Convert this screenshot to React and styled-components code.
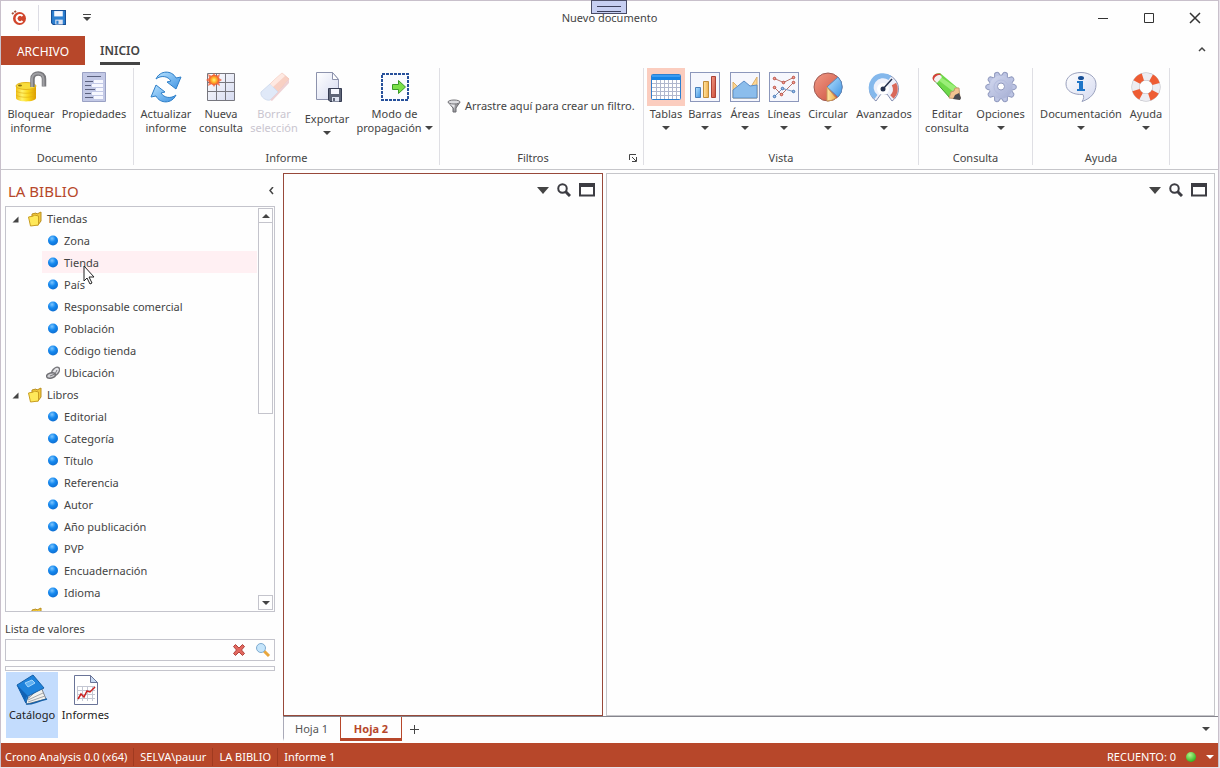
import React from 'react';
import styled, { createGlobalStyle } from 'styled-components';

const GlobalStyle = createGlobalStyle`
    * { box-sizing: border-box; }
    body {
        margin: 0;
        background: #e9e2ea;
        color: #444;
        font-family: "Noto Sans", "Open Sans", sans-serif;
        font-size: 11px;
        line-height: 14px;
    }
    button, input { font: inherit; color: inherit; }
    button { margin: 0; padding: 0; border: 0; background: none; cursor: default; white-space: nowrap; }
    svg { display: block; flex: none; }
    ul { margin: 0; padding: 0; list-style: none; }
`;

const RED = '#b7472a';

/* ---------- window ---------- */

const Page = styled.div`
    display: flex;
    height: 100vh;
    padding: 0 1px 1px 0;
`;

const Window = styled.div`
    position: relative;
    flex: 1;
    min-width: 0;
    display: flex;
    flex-direction: column;
    background: #fefefe;
    border: 1px solid #c8c0cb;
    border-bottom: 0;
`;

const TitleBar = styled.header`
    display: grid;
    grid-template-columns: 1fr auto 1fr;
    align-items: center;
    height: 35px;
    padding-bottom: 2px;
`;

const QuickAccess = styled.div`
    display: flex;
    align-items: center;
    gap: 12px;
    padding-left: 8px;
`;

const QuickSeparator = styled.span`
    width: 1px;
    height: 26px;
    margin-left: -1px;
    background: #dcdce4;
`;

const Title = styled.h1`
    margin: 0;
    font-size: 11px;
    font-weight: 400;
    line-height: 14px;
`;

const WindowButtons = styled.div`
    display: flex;
    justify-content: flex-end;
    button {
        display: flex;
        align-items: center;
        justify-content: center;
        width: 46px;
        height: 32px;
    }
`;

/* the small handle lies over the top edge of the window */
const PullHandle = styled.div`
    position: absolute;
    top: -1px;
    left: 50%;
    width: 36px;
    height: 14px;
    margin-left: -19px;
    padding: 5px 5px;
    border: 1px solid #4a4c66;
    background: #c7cff2;
    &::before {
        content: '';
        display: block;
        height: 4px;
        border: solid #3c3f5c;
        border-width: 1px 0;
    }
`;

/* ---------- ribbon ---------- */

const RibbonTabs = styled.nav`
    display: flex;
    align-items: stretch;
    height: 29px;
    font-size: 12px;
`;

const FileTab = styled.button`
    width: 84px;
    padding-top: 2px;
    background: ${RED};
    color: #fff;
`;

const RibbonTab = styled.button`
    margin-left: 15px;
    padding-top: 3px;
    border-bottom: 3px solid #444;
    font-weight: 600;
`;

const CollapseButton = styled.button`
    margin-left: auto;
    padding: 0 11px 4px;
`;

const RibbonBar = styled.div`
    display: flex;
    height: 105px;
    padding: 3px 0 4px;
    border-bottom: 1px solid #c6c6ca;
`;

const Group = styled.section`
    display: flex;
    flex-direction: column;
    justify-content: space-between;
    padding: 0 3px;
    border-right: 1px solid #dfdfe4;
`;

const GroupItems = styled.div`
    display: flex;
    align-items: flex-start;
`;

const GroupFooter = styled.div`
    display: flex;
    align-items: center;
    height: 14px;
    span { flex: 1; text-align: center; }
    button { width: 17px; padding-left: 6px; }
`;

const ToolButton = styled.button`
    display: flex;
    flex-direction: column;
    align-items: center;
    width: ${(props) => props.$width}px;
    color: ${(props) => (props.disabled ? '#c9c5cf' : '#444')};
`;

const ToolIcon = styled.span`
    display: flex;
    padding: 3px;
    margin-bottom: ${(props) => (props.$spaced ? 6 : 1)}px;
    background: ${(props) => (props.$active ? '#fbcdbf' : 'transparent')};
    opacity: ${(props) => (props.$faded ? 0.5 : 1)};
`;

const Line = styled.span`
    display: flex;
    align-items: center;
    justify-content: center;
    gap: 3px;
    height: 14px;
`;

const FilterDrop = styled.div`
    display: flex;
    align-items: center;
    gap: 4px;
    width: 197px;
    height: 76px;
    padding-left: 4px;
    white-space: nowrap;
`;

/* ---------- body ---------- */

const Body = styled.main`
    flex: 1;
    min-height: 0;
    display: flex;
    gap: 8px;
    padding-top: 3px;
`;

const Sidebar = styled.aside`
    display: flex;
    flex-direction: column;
    flex: none;
    width: 274px;
    padding: 0 0 5px 4px;
`;

const SidebarHead = styled.div`
    display: flex;
    align-items: center;
    justify-content: space-between;
    height: 33px;
    padding-left: 3px;
    padding-top: 2px;
    h2 {
        margin: 0;
        font-size: 15px;
        font-weight: 400;
        line-height: 20px;
        color: ${RED};
    }
`;

const TreeBox = styled.div`
    flex: 1;
    min-height: 0;
    display: flex;
    border: 1px solid #c4c4cc;
`;

const Tree = styled.ul`
    flex: 1;
    overflow: hidden;
`;

const Row = styled.li`
    display: flex;
    align-items: center;
    gap: 4px;
    height: 22px;
    margin-left: ${(props) => (props.$level ? 36 : 6)}px;
    padding: 2px 0 0 ${(props) => (props.$level ? 4 : 0)}px;
    background: ${(props) => (props.$hover ? '#fff0f3' : 'transparent')};
`;

const Expander = styled.button`
    width: 11px;
`;

const ScrollBar = styled.div`
    display: flex;
    flex-direction: column;
    width: 15px;
    margin: 1px;
    button {
        display: flex;
        align-items: center;
        justify-content: center;
        height: 15px;
        border: 1px solid #c4c4cc;
    }
`;

const ScrollTrack = styled.div`
    flex: 1;
    &::before {
        content: '';
        display: block;
        height: 51%;
        border: 1px solid #c4c4cc;
        border-top: 0;
    }
`;

const ValuesLabel = styled.label`
    padding: 10px 0 3px;
`;

const SearchBox = styled.div`
    display: flex;
    align-items: center;
    gap: 9px;
    height: 22px;
    padding-right: 3px;
    border: 1px solid #c4c4cc;
    input {
        flex: 1;
        min-width: 0;
        border: 0;
        outline: 0;
        background: none;
    }
`;

const Splitter = styled.div`
    height: 5px;
    margin: 5px 0 1px;
    border: 1px solid #c4c4cc;
`;

const Views = styled.div`
    display: flex;
    height: 66px;
    padding-left: 1px;
`;

const ViewButton = styled.button`
    display: flex;
    flex-direction: column;
    align-items: center;
    width: ${(props) => (props.$active ? 52 : 55)}px;
    padding-top: 2px;
    gap: 2px;
    color: #222;
    background: ${(props) => (props.$active ? '#c3dcfd' : 'transparent')};
`;

const Workspace = styled.section`
    flex: 1;
    min-width: 0;
    display: flex;
    flex-direction: column;
`;

const Panels = styled.div`
    flex: 1;
    display: grid;
    grid-template-columns: 320fr 609fr;
    gap: 3px;
    padding-right: 3px;
`;

const Panel = styled.article`
    border: 1px solid ${(props) => (props.$active ? '#98493a' : '#c6c6ca')};
`;

const PanelTools = styled.div`
    display: flex;
    align-items: center;
    justify-content: flex-end;
    gap: 8px;
    padding: 8px 7px 0 0;
`;

const SheetBar = styled.div`
    display: flex;
    height: 27px;
    padding-bottom: 2px;
    border-top: 1px solid #85858d;
`;

const SheetTab = styled.button`
    width: ${(props) => (props.$active ? 62 : 57)}px;
    padding-top: 2px;
    border: solid ${(props) => (props.$active ? RED : 'transparent')};
    border-width: 0 1px 3px;
    border-left-color: ${(props) => (props.$active ? RED : '#aaaab8')};
    font-weight: ${(props) => (props.$active ? 700 : 400)};
    color: ${(props) => (props.$active ? RED : '#555')};
`;

const AddSheet = styled.button`
    width: 24px;
    padding-left: 7px;
`;

const SheetMenu = styled.button`
    margin-left: auto;
    padding-right: 8px;
`;

const StatusBar = styled.footer`
    display: flex;
    align-items: center;
    height: 24px;
    padding-top: 3px;
    background: ${RED};
    color: #fff;
`;

const StatusItem = styled.span`
    padding: 2px 6px 2px 4px;
    border-right: ${(props) => (props.$last ? '0' : '1px solid #a03a20')};
    & + & { padding-left: 6px; }
`;

const StatusRight = styled.div`
    display: flex;
    align-items: center;
    gap: 10px;
    margin-left: auto;
    padding-right: 4px;
`;

/* the pointer floats over the tree */
const Pointer = styled.svg`
    position: absolute;
    left: 82px;
    top: 264px;
`;

/* ---------- icons ---------- */

const HiddenSvg = styled.svg`
    position: absolute;
    width: 0;
    height: 0;
`;

const Defs = () => (
    <HiddenSvg aria-hidden="true">
        <defs>
            <linearGradient id="gold" x1="0" x2="1"><stop offset="0" stopColor="#f0bd14" /><stop offset=".3" stopColor="#fff36a" /><stop offset=".6" stopColor="#fbd81c" /><stop offset="1" stopColor="#dc9c00" /></linearGradient>
            <linearGradient id="paper" x1="0" y1="0" x2="1" y2="1"><stop offset="0" stopColor="#fff" /><stop offset="1" stopColor="#d5daf0" /></linearGradient>
            <linearGradient id="gear" x1="0" y1="0" x2="1" y2="1"><stop offset="0" stopColor="#d3d9f0" /><stop offset="1" stopColor="#a4add2" /></linearGradient>
            <linearGradient id="blue" x1="0" y1="0" x2="1" y2="1"><stop offset="0" stopColor="#b7e2ff" /><stop offset="1" stopColor="#3f93e2" /></linearGradient>
            <linearGradient id="orange" x1="0" y1="0" x2="1" y2="0"><stop offset="0" stopColor="#ffe6a6" /><stop offset="1" stopColor="#f2b04c" /></linearGradient>
            <linearGradient id="red" x1="0" y1="0" x2="1" y2="1"><stop offset="0" stopColor="#f19a86" /><stop offset="1" stopColor="#cb4c3a" /></linearGradient>
            <radialGradient id="ball" cx=".4" cy=".3" r=".7"><stop offset="0" stopColor="#7cc6ff" /><stop offset=".5" stopColor="#1488ef" /><stop offset="1" stopColor="#0f6fd2" /></radialGradient>
            <radialGradient id="green" cx=".4" cy=".3" r=".7"><stop offset="0" stopColor="#b5f58c" /><stop offset="1" stopColor="#2db51f" /></radialGradient>
            <radialGradient id="sun"><stop offset="0" stopColor="#fff77a" /><stop offset=".5" stopColor="#ffb429" /><stop offset="1" stopColor="#f0552c" /></radialGradient>
        </defs>
    </HiddenSvg>
);

const Svg = ({ size = 32, children }) => (
    <svg width={size} height={size} viewBox={`0 0 ${size} ${size}`} aria-hidden="true">{children}</svg>
);

const Caret = ({ wide, up, color = '#444' }) => (
    <svg width={wide ? 12 : 8} height={wide ? 7 : 4} viewBox="0 0 8 4" preserveAspectRatio="none" aria-hidden="true">
        <path d={up ? 'M0 4h8L4 0z' : 'M0 0h8L4 4z'} fill={color} />
    </svg>
);

const LockIcon = () => (
    <Svg>
        <path d="M1 15v12c0 4.500 20 4.500 20 0V15z" fill="url(#gold)" />
        <path d="M1 20c4 3 16 3 20 0M1 24c4 3 16 3 20 0" fill="none" stroke="#e0ae10" opacity=".6" />
        <ellipse cx="11" cy="15" rx="10" ry="3.500" fill="#f8dc3c" stroke="#e3b41c" />
        <ellipse cx="5" cy="14.500" rx="2" ry="1" fill="#8b7010" />
        <path d="M17.500 16V8c0-7.500 11.500-7.500 11.500 0v7.500" fill="none" stroke="#77777b" strokeWidth="4.500" />
        <path d="M17 16V8c0-7.500 11.500-7.500 11.500 0v7" fill="none" stroke="#a0a0a4" strokeWidth="2" />
    </Svg>
);

const PropertiesIcon = () => (
    <Svg>
        <path d="M4.500 1.500h23v29h-23z" fill="#c3c9e6" stroke="#9aa1c4" />
        <path d="M9 5.500h14" stroke="#5b617e" />
        <path d="M16 9h9v3h-9zM14 13h11v3H14zM18 17h7v3h-7zM14 21h11v3H14zM16 25h9v3h-9z" fill="#f7f8ff" />
        <path d="M7 10.500h8M7 14.500h6M7 18.500h10M7 22.500h6M7 26.500h8" stroke="#5b617e" />
    </Svg>
);

const RefreshIcon = () => (
    <Svg>
        <path d="M6 8C10-1 22-1 26 7l5-1-5 12-9-7 4-1C18 5 11 4 6 8z" fill="url(#blue)" stroke="#2f7fc8" />
        <path d="M26 24C22 33 10 33 6 25l-5 1 5-12 9 7-4 1c3 5 10 6 15 2z" fill="url(#blue)" stroke="#2f7fc8" />
    </Svg>
);

const NewQueryIcon = () => (
    <Svg>
        <path d="M2.500 2.500h27v27h-27z" fill="url(#paper)" stroke="#77777f" />
        <path d="M11.500 3v27M20.500 3v27M3 11.500h27M3 20.500h27" stroke="#77777f" />
        <path d="M9 2l2 3 4-2-1 4 3 2-3 2 1 4-4-2-2 3-2-3-4 2 1-4-3-2 3-2-1-4 4 2z" fill="#f2603a" opacity=".8" />
        <circle cx="9" cy="9" r="5" fill="url(#sun)" />
    </Svg>
);

const EraserIcon = () => (
    <Svg>
        <path d="M12 13L24 2l7 6-12 14z" fill="#f3a38a" stroke="#e8927a" />
        <path d="M3 21l9-8 8 8-8 8c-4 1-10-3-9-8z" fill="#c3d6f3" stroke="#a5bce0" />
        <path d="M12 13L24 2l3 3-12 11z" fill="#ffd6c7" />
        <path d="M12 29l8-8 11-13v4L14 30z" fill="#e0a6ac" />
    </Svg>
);

const Floppy = ({ x = 0, y = 0, scale = 1, color = '#4b536b', edge = '#363c52' }) => (
    <g transform={`translate(${x} ${y}) scale(${scale})`}>
        <path d="M.5.5h13v13H2L.5 12z" fill={color} stroke={edge} />
        <path d="M3 1h8v5H3z" fill="#f6f8ff" />
        <path d="M4 9h7v4.500H4z" fill="#dfe4f2" />
        <path d="M5 10h2v3H5z" fill={color} />
    </g>
);

const ExportIcon = () => (
    <Svg>
        <path d="M5.500 1.500h16l6 7v20h-22z" fill="url(#paper)" stroke="#8d93ad" />
        <path d="M21.500 1.500v7h6z" fill="#fff" stroke="#8d93ad" />
        <Floppy x={17} y={17} color="#5f6678" />
    </Svg>
);

const PropagationIcon = () => (
    <Svg>
        <rect x="3" y="3" width="26" height="26" fill="#fbfcff" stroke="#27509b" strokeWidth="2" strokeDasharray="3 1" />
        <path d="M13.500 13.500h6v-4l7 6.500-7 6.500v-4h-6z" fill="#7be04a" stroke="#3a9a28" />
    </Svg>
);

const FunnelIcon = () => (
    <Svg size={14}>
        <path d="M1 3l5 6v4h3V9l4-6z" fill="#98989c" stroke="#6b6b70" />
        <path d="M2 4l5 5v3l1-8z" fill="#e8e8ec" />
        <ellipse cx="7" cy="3" rx="6" ry="2" fill="#dcdce0" stroke="#747478" />
    </Svg>
);

const TableIcon = () => (
    <Svg>
        <rect x="1.500" y="3.500" width="29" height="25" rx="1" fill="#fff" stroke="#2c7fd0" />
        <path d="M2 4h28v5H2z" fill="#1683e4" />
        <path d="M2 5h28" stroke="#5fb4ff" />
        <path d="M6.500 9v19M10.500 9v19M14.500 9v19M18.500 9v19M22.500 9v19M26.500 9v19M2 12.500h28M2 16.500h28M2 20.500h28M2 24.500h28" stroke="#b0b7cd" />
    </Svg>
);

const ChartFrame = () => <rect x="1.500" y="1.500" width="29" height="29" fill="#f6f7fd" stroke="#8c97bb" />;

const BarsIcon = () => (
    <Svg>
        <ChartFrame />
        <path d="M6.500 16.500h5v10h-5z" fill="url(#blue)" stroke="#4a80bb" />
        <path d="M14.500 10.500h5v16h-5z" fill="url(#orange)" stroke="#c08c3a" />
        <path d="M22.500 5.500h4v21h-4z" fill="url(#red)" stroke="#ab4236" />
    </Svg>
);

const AreasIcon = () => (
    <Svg>
        <ChartFrame />
        <path d="M4 11l6 6 10 2 8-13v21H4z" fill="#ffd793" stroke="#dcae66" />
        <path d="M4 19l11-9 6 5 7-1v13H4z" fill="#8bbdec" stroke="#5a8cc6" />
    </Svg>
);

const LinesIcon = () => (
    <Svg>
        <ChartFrame />
        <path d="M6.500 7.500l9 4 10-5M6.500 16.500l7 7 12-12" fill="none" stroke="#b8736b" />
        <path d="M6.500 25.500l8-8 11 3" fill="none" stroke="#7392bd" />
        <g fill="#f5a397" stroke="#b8483c">
            <circle cx="6.500" cy="7.500" r="1.250" /><circle cx="15.500" cy="11.500" r="1.250" /><circle cx="25.500" cy="6.500" r="1.250" />
            <circle cx="6.500" cy="16.500" r="1.250" /><circle cx="13.500" cy="23.500" r="1.250" /><circle cx="25.500" cy="11.500" r="1.250" />
        </g>
        <g fill="#9cc3ef" stroke="#3f70b0">
            <circle cx="6.500" cy="25.500" r="1.250" /><circle cx="14.500" cy="17.500" r="1.250" /><circle cx="25.500" cy="20.500" r="1.250" />
        </g>
    </Svg>
);

const PieIcon = () => (
    <Svg>
        <circle cx="16" cy="16" r="14" fill="url(#red)" stroke="#9e5a54" />
        <path d="M15 16L26 6a14 14 0 010 20z" fill="url(#blue)" stroke="#5a86ba" />
        <path d="M15 16l9 11a14 14 0 01-9 3z" fill="url(#orange)" stroke="#c99855" />
    </Svg>
);

const GaugeIcon = () => (
    <Svg>
        <path d="M8 30A14.500 14.500 0 1124 30l-5-7h-6z" fill="#eef1fb" stroke="#8690b2" />
        <path d="M8 26A11 11 0 0122 7" fill="none" stroke="#84b8ec" strokeWidth="5" />
        <path d="M26 13a11 11 0 01-2 13" fill="none" stroke="#d9695a" strokeWidth="5" />
        <circle cx="15" cy="18" r="6" fill="#fff" />
        <path d="M15 18l9-10" stroke="#25324f" strokeWidth="1.500" />
        <circle cx="15" cy="18" r="2.500" fill="#25324f" />
    </Svg>
);

const PencilIcon = () => (
    <Svg>
        <path d="M2 8C1 5 4 2 9 2l19 16-9 9z" fill="#6fd94a" />
        <path d="M8 5l20 13-4 4L6 8z" fill="#9bee78" />
        <path d="M2.500 8.500L19 27" stroke="#3f9c2b" />
        <path d="M2 9C0 5 5 1 10 3L4 11z" fill="#d5403a" />
        <path d="M3 9c0-3 3-5 6-5l2 2-5 6z" fill="#f4f1f1" />
        <path d="M18 27l2-6 3-1 1-3 4 0 1 11z" fill="#f3c391" stroke="#c49a70" />
        <path d="M22 28l2-4 4-2 2 5-1 2z" fill="#4a4a50" />
    </Svg>
);

const GearIcon = () => (
    <Svg>
        {[0, 36, 72, 108, 144, 180, 216, 252, 288, 324].map((a) => (
            <path key={a} d="M12.500 6l1.500-4.500c1-1 3-1 4 0L19.500 6z" fill="#bcc4e3" stroke="#8f98bd" transform={`rotate(${a + 18} 16 16)`} />
        ))}
        <circle cx="16" cy="16" r="11.500" fill="url(#gear)" />
        <circle cx="16" cy="16" r="7" fill="none" stroke="#b4bcde" />
        <circle cx="16" cy="15.500" r="3.500" fill="#fff" stroke="#8f98bd" />
    </Svg>
);

const InfoIcon = () => (
    <Svg>
        <path d="M16 1.500c9 0 15 5 15 12 0 8-5 14-14 17 2-3 2-5 1-7C8 24 1 20 1 13S7 1.500 16 1.500z" fill="url(#paper)" stroke="#9aa1bd" />
        <ellipse cx="16" cy="7" rx="3" ry="2" fill="#174f96" />
        <path d="M12 10h6v8h2v2h-8v-2h2v-6h-2z" fill="#1f76c8" />
    </Svg>
);

const RingIcon = () => (
    <Svg>
        <circle cx="16" cy="16" r="10.500" fill="none" stroke="#b4b4bc" strokeWidth="8" />
        <circle cx="16" cy="16" r="10.500" fill="none" stroke="#ededf2" strokeWidth="7" />
        <circle cx="16" cy="16" r="10.500" fill="none" stroke="#ee5c33" strokeWidth="7.500" strokeDasharray="8 8.493" strokeDashoffset="-5" />
    </Svg>
);

const FolderIcon = () => (
    <Svg size={16}>
        <path d="M5 3l4-1 1 1 4-2v9l-3 4-6-1z" fill="#f3c93a" stroke="#b98e20" />
        <path d="M1.500 6l5-1 1-1 4 1v9l-8 1z" fill="#ffe95a" stroke="#c99e20" />
    </Svg>
);

const Ball = () => (
    <Svg size={14}><circle cx="7" cy="6.500" r="5" fill="url(#ball)" /></Svg>
);

const ChainIcon = () => (
    <Svg size={14}>
        <ellipse cx="9.500" cy="5.500" rx="5" ry="3" transform="rotate(-50 9.500 5.500)" fill="#e4e4e8" stroke="#77777b" strokeWidth="1.500" />
        <ellipse cx="5" cy="9.500" rx="4.500" ry="2.500" transform="rotate(-15 5 9.500)" fill="#d0d0d4" stroke="#707074" strokeWidth="1.500" />
        <path d="M4 10l5-2 2-4" fill="none" stroke="#77777b" />
    </Svg>
);

const ExpanderMark = () => (
    <Svg size={7}><path d="M6.500.5v6h-6z" fill="#444" /></Svg>
);

const ClearIcon = () => (
    <Svg size={14}>
        <path d="M1.500 3.500l2-2L7 5l3.500-3.500 2 2L9.500 7l3 3.500-2 2L7 9l-3.500 3.500-2-2L4.500 7z" fill="#e2675e" stroke="#b0433d" />
    </Svg>
);

const FindIcon = () => (
    <Svg size={16}>
        <path d="M9 9l5 5" stroke="#e8a63c" strokeWidth="3" />
        <circle cx="6" cy="6" r="4.500" fill="#c5e5fb" stroke="#7fabd0" />
    </Svg>
);

const ZoomIcon = () => (
    <Svg size={14}>
        <circle cx="5.500" cy="5.500" r="4.250" fill="none" stroke="#3c3c42" strokeWidth="2" />
        <path d="M8.500 8.500l4.500 4.500" stroke="#3c3c42" strokeWidth="3" />
    </Svg>
);

const MaximizeIcon = () => (
    <Svg size={16}>
        <path d="M1 2.500h14v11H1z" fill="none" stroke="#3c3c42" strokeWidth="2" />
        <path d="M0 1h16v4H0z" fill="#3c3c42" />
    </Svg>
);

const BookIcon = () => (
    <Svg>
        <path d="M9 27l16-14 5 12-19 5z" fill="#f2f2ee" stroke="#7c8087" />
        <path d="M12 26l15-7M12 28l17-6" stroke="#a4a7ac" />
        <path d="M1 11L17 1l11 13-16 8-2 7z" fill="#1f83dc" stroke="#1560a8" />
        <path d="M1 11l9 19c-1-5 0-7 2-8z" fill="#1262b4" />
        <path d="M9 9l7-3 3 3-7 4z" fill="#5fb0f2" stroke="#a5d6fb" />
        <path d="M10 30c5 1 9-2 21-5" fill="none" stroke="#1560a8" strokeWidth="1.500" />
    </Svg>
);

const ReportIcon = () => (
    <Svg>
        <path d="M4.500 1.500h16l7 7v22h-23z" fill="#fff" stroke="#6a7498" />
        <path d="M20.500 1.500v7h7z" fill="#c7daf2" stroke="#6a7498" />
        <path d="M7 12.500h18M7 16.500h18M7 20.500h18M7 24.500h18M7.500 12v15M12.500 12v15M17.500 12v15M22.500 12v15" stroke="#c4c7d3" />
        <path d="M8 25l3-5 3 3 3-6 3 1 5-5" fill="none" stroke="#c92020" strokeWidth="1.500" />
    </Svg>
);

const LogoIcon = () => (
    <Svg size={18}>
        <circle cx="10.500" cy="9.500" r="6.500" fill="#d1452c" />
        <path d="M13.500 7a3.500 3.500 0 100 5" fill="none" stroke="#fff" strokeWidth="2" />
        <path d="M3 5l4-3" stroke="#a4523e" strokeWidth="2" strokeDasharray="2 1" />
    </Svg>
);

/* ---------- data ---------- */

const groups = [
    {
        name: 'Documento',
        items: [
            { width: 54, lines: ['Bloquear', 'informe'], icon: LockIcon },
            { width: 72, lines: ['Propiedades'], icon: PropertiesIcon },
        ],
    },
    {
        name: 'Informe',
        items: [
            { width: 58, lines: ['Actualizar', 'informe'], icon: RefreshIcon },
            { width: 52, lines: ['Nueva', 'consulta'], icon: NewQueryIcon },
            { width: 54, lines: ['Borrar', 'selección'], icon: EraserIcon, disabled: true },
            { width: 52, lines: ['Exportar'], icon: ExportIcon, menu: true, spaced: true },
            { width: 83, lines: ['Modo de', 'propagación'], icon: PropagationIcon, inlineMenu: true },
        ],
    },
    { name: 'Filtros', filter: true },
    {
        name: 'Vista',
        items: [
            { width: 38, lines: ['Tablas'], icon: TableIcon, menu: true, active: true },
            { width: 40, lines: ['Barras'], icon: BarsIcon, menu: true },
            { width: 40, lines: ['Áreas'], icon: AreasIcon, menu: true },
            { width: 38, lines: ['Líneas'], icon: LinesIcon, menu: true },
            { width: 50, lines: ['Circular'], icon: PieIcon, menu: true },
            { width: 62, lines: ['Avanzados'], icon: GaugeIcon, menu: true },
        ],
    },
    {
        name: 'Consulta',
        items: [
            { width: 50, lines: ['Editar', 'consulta'], icon: PencilIcon },
            { width: 57, lines: ['Opciones'], icon: GearIcon, menu: true },
        ],
    },
    {
        name: 'Ayuda',
        items: [
            { width: 90, lines: ['Documentación'], icon: InfoIcon, menu: true },
            { width: 40, lines: ['Ayuda'], icon: RingIcon, menu: true },
        ],
    },
];

const tree = [
    { name: 'Tiendas', items: ['Zona', 'Tienda', 'País', 'Responsable comercial', 'Población', 'Código tienda', 'Ubicación'] },
    { name: 'Libros', items: ['Editorial', 'Categoría', 'Título', 'Referencia', 'Autor', 'Año publicación', 'PVP', 'Encuadernación', 'Idioma'] },
    { name: 'Tiempo', items: [] },
];

/* ---------- components ---------- */

const Tool = ({ item }) => {
    const Icon = item.icon;
    return (
        <ToolButton $width={item.width} disabled={item.disabled}>
            <ToolIcon $active={item.active} $spaced={item.spaced} $faded={item.disabled}><Icon /></ToolIcon>
            {item.lines.map((line, i) => (
                <Line key={line}>
                    {line}
                    {item.inlineMenu && i === 1 && <Caret />}
                </Line>
            ))}
            {item.menu && <Line><Caret /></Line>}
        </ToolButton>
    );
};

const RibbonGroup = ({ group }) => (
    <Group>
        <GroupItems>
            {group.filter
                ? <FilterDrop><FunnelIcon />Arrastre aquí para crear un filtro.</FilterDrop>
                : group.items.map((item) => <Tool item={item} key={item.lines[0]} />)}
        </GroupItems>
        <GroupFooter>
            <span>{group.name}</span>
            {group.filter && (
                <button aria-label="Opciones de filtros">
                    <Svg size={8}><path d="M.5 6V.5H7M3 3l4 4M7.500 3v4.500H3" fill="none" stroke="#444" /></Svg>
                </button>
            )}
        </GroupFooter>
    </Group>
);

const FieldTree = () => (
    <Tree>
        {tree.map((folder) => (
            <React.Fragment key={folder.name}>
                <Row>
                    <Expander aria-label={folder.name}><ExpanderMark /></Expander>
                    <FolderIcon />
                    <span>{folder.name}</span>
                </Row>
                {folder.items.map((name) => (
                    <Row key={name} $level={1} $hover={name === 'Tienda'}>
                        {name === 'Ubicación' ? <ChainIcon /> : <Ball />}
                        <span>{name}</span>
                    </Row>
                ))}
            </React.Fragment>
        ))}
    </Tree>
);

const SheetPanel = ({ active }) => (
    <Panel $active={active}>
        <PanelTools>
            <button aria-label="Menú"><Caret wide /></button>
            <button aria-label="Zoom"><ZoomIcon /></button>
            <button aria-label="Maximizar panel"><MaximizeIcon /></button>
        </PanelTools>
    </Panel>
);

export default class App extends React.Component {
    state = { search: '' };

    onSearch = (e) => {
        this.setState({ search: e.target.value });
    }

    render() {
        return (
            <Page>
                <GlobalStyle />
                <Defs />
                <Window>
                    <TitleBar>
                        <QuickAccess>
                            <LogoIcon />
                            <QuickSeparator />
                            <button aria-label="Guardar"><Svg size={15}><Floppy scale={1.07} color="#2c7fd0" edge="#174f96" /></Svg></button>
                            <button aria-label="Personalizar">
                                <svg width="18" height="8" viewBox="-5 0 18 8"><path d="M0 .5h8" stroke="#444" /><path d="M0 3h8L4 7z" fill="#444" /></svg>
                            </button>
                        </QuickAccess>
                        <Title>Nuevo documento</Title>
                        <WindowButtons>
                            <button aria-label="Minimizar"><Svg size={12}><path d="M1 6.500h10" stroke="#333" /></Svg></button>
                            <button aria-label="Maximizar"><Svg size={12}><path d="M1.500 1.500h9v9h-9z" fill="none" stroke="#333" /></Svg></button>
                            <button aria-label="Cerrar"><Svg size={12}><path d="M1 1l10 10M11 1L1 11" stroke="#333" strokeWidth="1.500" /></Svg></button>
                        </WindowButtons>
                    </TitleBar>
                    <RibbonTabs>
                        <FileTab>ARCHIVO</FileTab>
                        <RibbonTab>INICIO</RibbonTab>
                        <CollapseButton aria-label="Contraer">
                            <Svg size={10}><path d="M2 7l3-3 3 3" fill="none" stroke="#444" strokeWidth="1.500" /></Svg>
                        </CollapseButton>
                    </RibbonTabs>
                    <RibbonBar>
                        {groups.map((group) => <RibbonGroup group={group} key={group.name} />)}
                    </RibbonBar>
                    <Body>
                        <Sidebar>
                            <SidebarHead>
                                <h2>LA BIBLIO</h2>
                                <button aria-label="Ocultar"><Svg size={8}><path d="M6 0L3 3.500 6 7" fill="none" stroke="#444" strokeWidth="1.500" /></Svg></button>
                            </SidebarHead>
                            <TreeBox>
                                <FieldTree />
                                <ScrollBar>
                                    <button aria-label="Subir"><Caret up /></button>
                                    <ScrollTrack />
                                    <button aria-label="Bajar"><Caret /></button>
                                </ScrollBar>
                            </TreeBox>
                            <ValuesLabel htmlFor="values">Lista de valores</ValuesLabel>
                            <SearchBox>
                                <input id="values" value={this.state.search} onChange={this.onSearch} />
                                <button aria-label="Borrar"><ClearIcon /></button>
                                <button aria-label="Buscar"><FindIcon /></button>
                            </SearchBox>
                            <Splitter />
                            <Views>
                                <ViewButton $active><BookIcon />Catálogo</ViewButton>
                                <ViewButton><ReportIcon />Informes</ViewButton>
                            </Views>
                        </Sidebar>
                        <Workspace>
                            <Panels>
                                <SheetPanel active />
                                <SheetPanel />
                            </Panels>
                            <SheetBar>
                                <SheetTab>Hoja 1</SheetTab>
                                <SheetTab $active>Hoja 2</SheetTab>
                                <AddSheet aria-label="Nueva hoja"><Svg size={11}><path d="M5.500 1v9M1 5.500h9" stroke="#444" /></Svg></AddSheet>
                                <SheetMenu aria-label="Hojas"><Caret /></SheetMenu>
                            </SheetBar>
                        </Workspace>
                    </Body>
                    <StatusBar>
                        <StatusItem>Crono Analysis 0.0 (x64)</StatusItem>
                        <StatusItem>SELVA\pauur</StatusItem>
                        <StatusItem>LA BIBLIO</StatusItem>
                        <StatusItem $last>Informe 1</StatusItem>
                        <StatusRight>
                            RECUENTO: 0
                            <Svg size={10}><circle cx="5" cy="5" r="5" fill="url(#green)" /></Svg>
                            <button aria-label="Más"><Caret color="#fff" /></button>
                        </StatusRight>
                    </StatusBar>
                    <PullHandle />
                    <Pointer width="13" height="20" viewBox="0 0 13 20">
                        <path d="M1 1v15l3-3 3 6 2-1-3-6h5z" fill="#fff" stroke="#222" />
                    </Pointer>
                </Window>
            </Page>
        );
    }
}
